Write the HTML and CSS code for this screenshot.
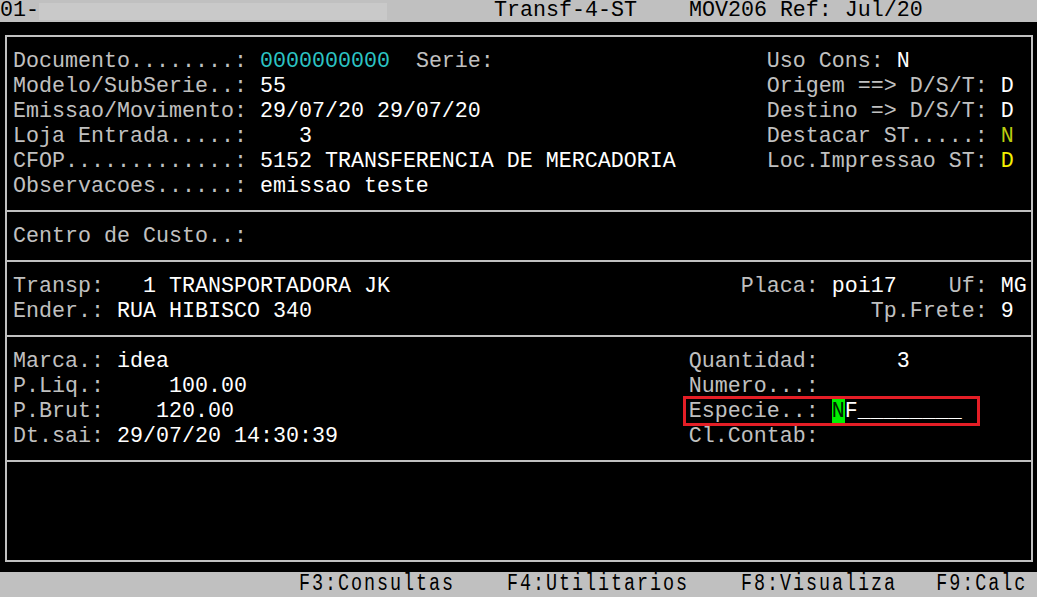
FILE: index.html
```html
<!DOCTYPE html>
<html lang="pt">
<head>
<meta charset="utf-8">
<title>MOV206 Transf-4-ST</title>
<link rel="stylesheet" href="styles.css">
</head>
<body>
<div class="titlebar">01-<span class="redact"></span>        Transf-4-ST    MOV206 Ref: Jul/20</div>
<div class="frame">
  <div class="sec">
    <div class="ln"><span class="l w58">Documento........: <span class="c">0000000000</span>  Serie:</span><span>Uso Cons: <span class="v">N</span></span></div>
    <div class="ln"><span class="l w58">Modelo/SubSerie..: <span class="v">55</span></span><span>Origem ==&gt; D/S/T: <span class="v">D</span></span></div>
    <div class="ln"><span class="l w58">Emissao/Movimento: <span class="v">29/07/20 29/07/20</span></span><span>Destino =&gt; D/S/T: <span class="v">D</span></span></div>
    <div class="ln"><span class="l w58">Loja Entrada.....: <span class="v">   3</span></span><span>Destacar ST.....: <span class="g">N</span></span></div>
    <div class="ln"><span class="l w58">CFOP.............: <span class="v">5152 TRANSFERENCIA DE MERCADORIA</span></span><span>Loc.Impressao ST: <span class="y">D</span></span></div>
    <div class="ln"><span class="l w58">Observacoes......: <span class="v">emissao teste</span></span></div>
  </div>
  <div class="sec">
    <div class="ln">Centro de Custo..:</div>
  </div>
  <div class="sec">
    <div class="ln"><span class="l w56">Transp:   <span class="v">1 TRANSPORTADORA JK</span></span><span>Placa: <span class="v">poi17</span>    Uf: <span class="v">MG</span></span></div>
    <div class="ln"><span class="l w66">Ender.: <span class="v">RUA HIBISCO 340</span></span><span>Tp.Frete: <span class="v">9</span></span></div>
  </div>
  <div class="sec">
    <div class="ln"><span class="l w52">Marca.: <span class="v">idea</span></span><span>Quantidad:<span class="v">      3</span></span></div>
    <div class="ln"><span class="l w52">P.Liq.:<span class="v">     100.00</span></span><span>Numero...:</span></div>
    <div class="ln"><span class="l w52">P.Brut:<span class="v">    120.00</span></span><span class="focus">Especie..: <span class="cursor">N</span><span class="v">F________</span></span></div>
    <div class="ln"><span class="l w52">Dt.sai: <span class="v">29/07/20 14:30:39</span></span><span>Cl.Contab:</span></div>
  </div>
  <div class="sec empty"></div>
</div>
<div class="keys"><span>                       F3:Consultas    F4:Utilitarios    F8:Visualiza   F9:Calc</span></div>
</body>
</html>
```
FILE: styles.css
```css
*, *::before, *::after { box-sizing: border-box; margin: 0; padding: 0; }
html, body { background: #000; }
body {
  width: 1037px;
  height: 597px;
  overflow: hidden;
  font-family: "Liberation Mono", "Courier New", monospace;
  font-size: 21.67px;
  line-height: 25px;
  color: #c0c0c0;
}
.titlebar {
  height: 22px;
  line-height: 22px;
  background: #c0c0c0;
  color: #000;
  white-space: pre;
}
.redact {
  display: inline-block;
  width: 348px;
  height: 17px;
  margin-top: 3px;
  margin-right: 3px;
  vertical-align: top;
  background: #c9c9c9;
}
.frame {
  margin: 13px 0 0 5px;
  width: 1028px;
  border: 2px solid #c0c0c0;
}
.sec {
  padding: 11.5px 0 11.5px 6px;
  border-bottom: 2px solid #c0c0c0;
}
.sec.empty {
  height: 98px;
  padding: 0;
  border-bottom: 0;
}
.ln {
  height: 25px;
  white-space: pre;
}
.l { display: inline-block; }
.w52 { width: 52ch; }
.w56 { width: 56ch; }
.w58 { width: 58ch; }
.w66 { width: 66ch; }
.v { color: #fff; }
.c { color: #2cc4c4; }
.g { color: #bccb10; }
.y { color: #f4f000; }
.focus { position: relative; }
.focus::after {
  content: "";
  position: absolute;
  left: -6px;
  top: -2.5px;
  width: 297px;
  height: 30px;
  border: 3px solid #e41e26;
}
.cursor {
  background: #00f000;
  color: #002000;
}
.keys {
  margin-top: 10px;
  height: 25px;
  background: #c0c0c0;
  color: #000;
  white-space: pre;
  overflow: hidden;
  font-size: 23px;
}
.keys span {
  display: inline-block;
  transform: scaleX(0.8);
  transform-origin: 0 0;
  letter-spacing: 2.45px;
}
```
